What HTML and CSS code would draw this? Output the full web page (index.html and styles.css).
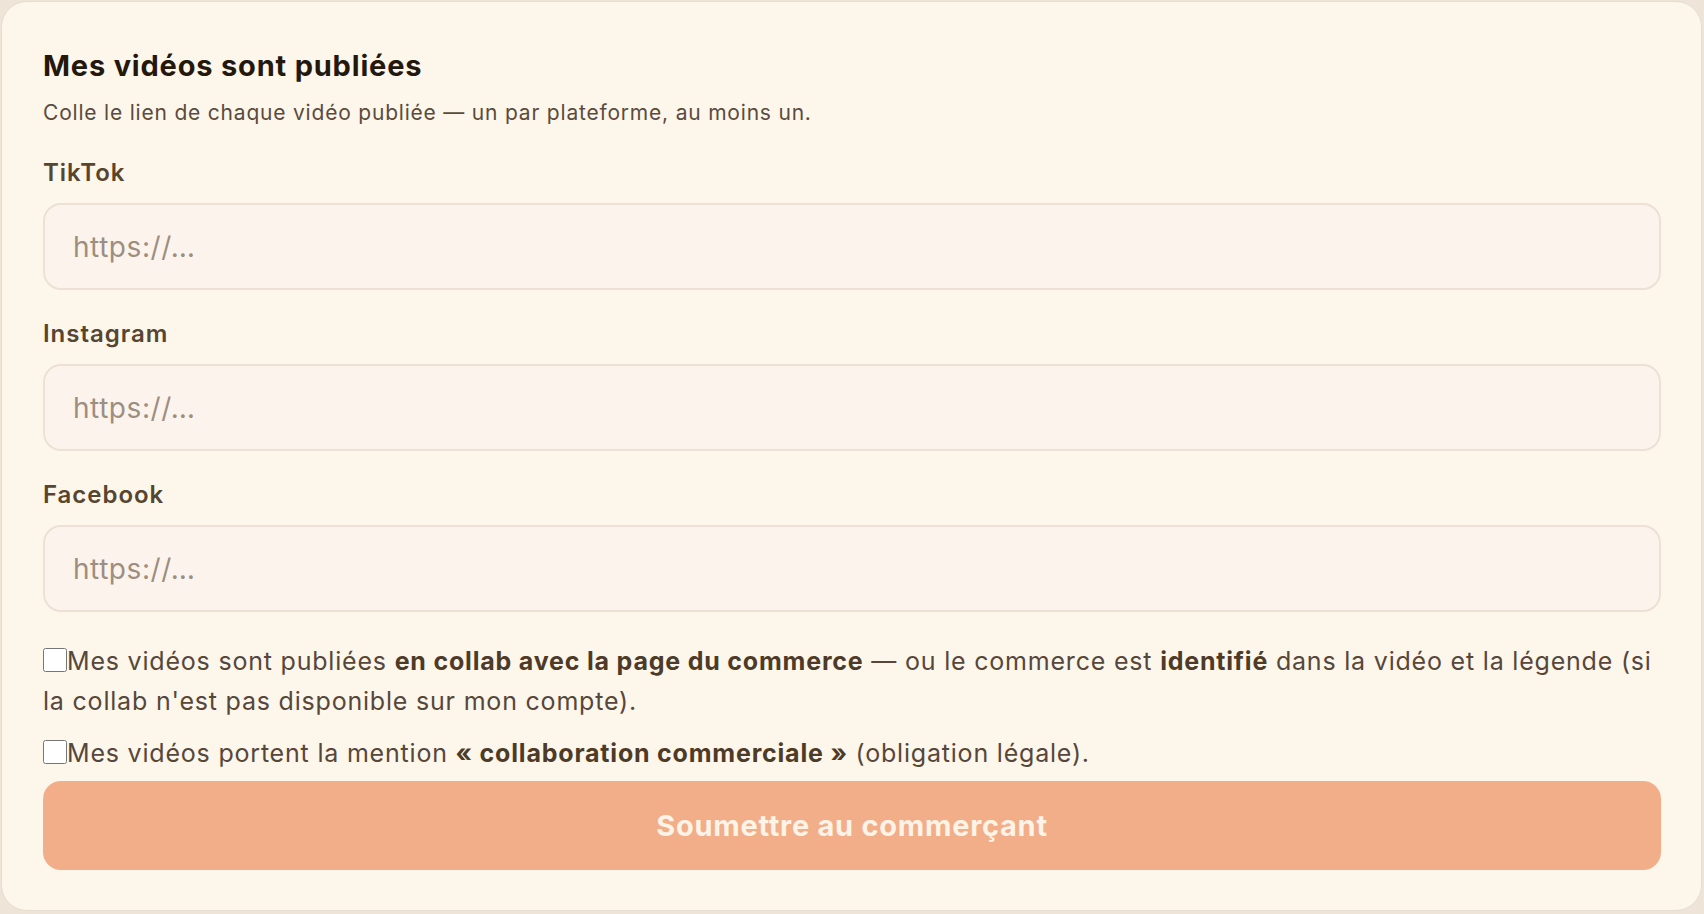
FILE: index.html
```html
<!DOCTYPE html>
<html lang="fr">
<head>
<meta charset="utf-8">
<title>Mes vidéos sont publiées</title>
<link rel="stylesheet" href="styles.css">
</head>
<body>
<form class="card">
  <h2 class="title">Mes vidéos sont publiées</h2>
  <p class="subtitle">Colle le lien de chaque vidéo publiée — un par plateforme, au moins un.</p>

  <label class="field">
    <span class="label">TikTok</span>
    <input class="input" type="url" placeholder="https://…">
  </label>
  <label class="field">
    <span class="label">Instagram</span>
    <input class="input" type="url" placeholder="https://…">
  </label>
  <label class="field">
    <span class="label">Facebook</span>
    <input class="input" type="url" placeholder="https://…">
  </label>

  <div class="checks">
    <label class="check"><input type="checkbox" class="box">Mes vidéos sont publiées <strong>en collab avec la page du commerce</strong> — ou le commerce est <strong>identifié</strong> dans la vidéo et la légende (si la collab n'est pas disponible sur mon compte).</label>
    <label class="check"><input type="checkbox" class="box">Mes vidéos portent la mention <strong>« collaboration commerciale »</strong> (obligation légale).</label>
  </div>

  <button type="button" class="submit" disabled>Soumettre au commerçant</button>
</form>
</body>
</html>
```

FILE: styles.css
```css
* { box-sizing: border-box; }

html, body {
  margin: 0;
  padding: 0;
  background: #eee5d8;
}

body {
  padding: 1px 2px 3px 1px;
  font-family: Inter, "Noto Sans", sans-serif;
  color: #57473a;
}

.card {
  background: #fdf6eb;
  border: 1px solid #e7ddcf;
  border-radius: 26px;
  padding: 46px 40px 40px 41px;
  display: flex;
  flex-direction: column;
  min-height: 910px;
}

.title {
  margin: 0;
  font-size: 29px;
  line-height: 36px;
  font-weight: 700;
  letter-spacing: 0.028em;
  color: #24180c;
}

.subtitle {
  margin: 14px 0 0;
  font-size: 21px;
  line-height: 30px;
  color: #5b4b3c;
  letter-spacing: 0.038em;
}

.field {
  display: flex;
  flex-direction: column;
  gap: 14px;
  margin-top: 28px;
}

.subtitle + .field { margin-top: 29px; }

.label {
  font-size: 24px;
  line-height: 32px;
  font-weight: 600;
  color: #57452f;
  letter-spacing: 0.04em;
}

.input {
  height: 87px;
  width: 100%;
  border: 2px solid #ece1d4;
  border-radius: 18px;
  background: #fcf4ec;
  padding: 0 28px;
  font-family: inherit;
  font-size: 28px;
  color: #3a2c1e;
  outline: none;
}

.input::placeholder {
  color: #9c8e80;
  letter-spacing: 0.02em;
}

.checks {
  margin-top: 29px;
  display: flex;
  flex-direction: column;
  gap: 12px;
}

.check {
  display: block;
  font-size: 25px;
  line-height: 40px;
  color: #57473a;
  letter-spacing: 0.032em;
}

.check strong {
  font-weight: 700;
  color: #4d3b28;
}

.box {
  width: 24px;
  height: 24px;
  margin: 0;
  vertical-align: -2px;
}

.submit {
  margin-top: 8px;
  height: 89px;
  width: 100%;
  border: none;
  border-radius: 18px;
  background: #f2ae88;
  color: #fdf3e6;
  font-family: inherit;
  font-size: 29px;
  font-weight: 700;
  letter-spacing: 0.025em;
}
```
